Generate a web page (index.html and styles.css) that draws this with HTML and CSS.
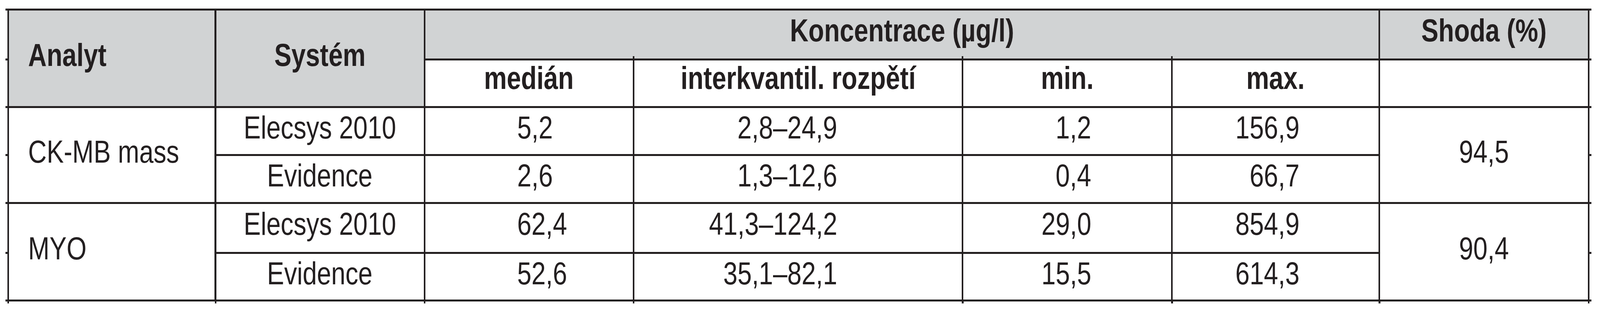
FILE: index.html
```html
<!DOCTYPE html>
<html lang="cs">
<head>
<meta charset="utf-8">
<title>Tabulka</title>
<link rel="stylesheet" href="styles.css">
</head>
<body>
<div class="page">
 <div class="frame">
  <div class="table">
    <div class="cell hd left span-r2 c1"><span class="t">Analyt</span></div>
    <div class="cell hd span-r2 c2"><span class="t">Systém</span></div>
    <div class="cell hd top-row span-konc"><span class="t">Koncentrace (µg/l)</span></div>
    <div class="cell hd top-row c7"><span class="t">Shoda (%)</span></div>

    <div class="cell sub c3"><span class="t">medián</span></div>
    <div class="cell sub c4"><span class="t">interkvantil. rozpětí</span></div>
    <div class="cell sub c5"><span class="t">min.</span></div>
    <div class="cell sub c6"><span class="t">max.</span></div>
    <div class="cell sub c7"></div>

    <div class="cell left span-r2 c1"><span class="t">CK-MB mass</span></div>
    <div class="cell c2"><span class="t">Elecsys 2010</span></div>
    <div class="cell num-med c3"><span class="t">5,2</span></div>
    <div class="cell num-iqr c4"><span class="t">2,8–24,9</span></div>
    <div class="cell num-min c5"><span class="t">1,2</span></div>
    <div class="cell num-max c6"><span class="t">156,9</span></div>
    <div class="cell span-r2 c7"><span class="t">94,5</span></div>

    <div class="cell c2"><span class="t">Evidence</span></div>
    <div class="cell num-med c3"><span class="t">2,6</span></div>
    <div class="cell num-iqr c4"><span class="t">1,3–12,6</span></div>
    <div class="cell num-min c5"><span class="t">0,4</span></div>
    <div class="cell num-max c6"><span class="t">66,7</span></div>

    <div class="cell left span-r2 c1"><span class="t">MYO</span></div>
    <div class="cell tall c2"><span class="t">Elecsys 2010</span></div>
    <div class="cell tall num-med c3"><span class="t">62,4</span></div>
    <div class="cell tall num-iqr c4"><span class="t">41,3–124,2</span></div>
    <div class="cell tall num-min c5"><span class="t">29,0</span></div>
    <div class="cell tall num-max c6"><span class="t">854,9</span></div>
    <div class="cell span-r2 c7"><span class="t">90,4</span></div>

    <div class="cell c2"><span class="t">Evidence</span></div>
    <div class="cell num-med c3"><span class="t">52,6</span></div>
    <div class="cell num-iqr c4"><span class="t">35,1–82,1</span></div>
    <div class="cell num-min c5"><span class="t">15,5</span></div>
    <div class="cell num-max c6"><span class="t">614,3</span></div>
  </div>
 </div>
</div>
</body>
</html>
```

FILE: styles.css
```css
/* Horizontal measures are authored in reference pixels (the reference is
   4853px wide) and expressed through --u, so the table always fits the
   real viewport width; vertical measures stay in px. */
:root {
  --u: calc(100vw / 4853);
  --sx: tan(atan2(100vw, 4853px));
  --ink: #231f20;
  --head: #d1d3d4;
}

html, body {
  margin: 0;
  padding: 0;
  background: #ffffff;
  overflow: hidden;
}

body {
  font-family: "Liberation Sans", Arial, sans-serif;
  color: var(--ink);
}

.page {
  padding: 22px 0 0 calc(16 * var(--u));
}

/* frame: rule stubs that overshoot the table on the left/right
   and small ticks of the column rules under the bottom rule */
.frame {
  display: inline-block;
  vertical-align: top;
  padding: 0 calc(6 * var(--u)) 5px;
  background:
    linear-gradient(to right,
      transparent calc(6 * var(--u)),
      var(--ink) calc(6 * var(--u)) calc(11 * var(--u)),
      transparent calc(11 * var(--u)) calc(635 * var(--u)),
      var(--ink) calc(635 * var(--u)) calc(640 * var(--u)),
      transparent calc(640 * var(--u)) calc(1269 * var(--u)),
      var(--ink) calc(1269 * var(--u)) calc(1274 * var(--u)),
      transparent calc(1274 * var(--u)) calc(1903 * var(--u)),
      var(--ink) calc(1903 * var(--u)) calc(1908 * var(--u)),
      transparent calc(1908 * var(--u)) calc(2901 * var(--u)),
      var(--ink) calc(2901 * var(--u)) calc(2906 * var(--u)),
      transparent calc(2906 * var(--u)) calc(3536 * var(--u)),
      var(--ink) calc(3536 * var(--u)) calc(3541 * var(--u)),
      transparent calc(3541 * var(--u)) calc(4165 * var(--u)),
      var(--ink) calc(4165 * var(--u)) calc(4170 * var(--u)),
      transparent calc(4170 * var(--u)) calc(4800 * var(--u)),
      var(--ink) calc(4800 * var(--u)) calc(4805 * var(--u)),
      transparent calc(4805 * var(--u))) 0 100% / 100% 5px no-repeat,
    linear-gradient(to bottom,
      var(--ink) 0 5px,
      transparent 5px 128px,
      var(--ink) 128px 133px,
      transparent 133px 250px,
      var(--ink) 250px 255px,
      transparent 255px 373px,
      var(--ink) 373px 378px,
      transparent 378px 496px,
      var(--ink) 496px 501px,
      transparent 501px 624px,
      var(--ink) 624px 629px,
      transparent 629px 746px,
      var(--ink) 746px 751px,
      transparent 751px) 0 0 / 100% 100% no-repeat;
}

.table {
  display: grid;
  padding: 5px calc(5 * var(--u));
  column-gap: calc(5 * var(--u));
  row-gap: 5px;
  background: var(--ink);
  grid-template-columns:
    calc(624 * var(--u)) calc(629 * var(--u)) calc(629 * var(--u))
    calc(993 * var(--u)) calc(630 * var(--u)) calc(624 * var(--u))
    calc(630 * var(--u));
  grid-template-rows: 123px 117px 118px 118px 123px 117px;
  grid-auto-flow: row dense;
}

.cell {
  display: flex;
  align-items: center;
  justify-content: center;
  min-width: 0;
  background: #ffffff;
  font-size: 81px;
  line-height: 1.15;
  white-space: nowrap;
  padding: 0 0 16px 0;
  box-sizing: border-box;
}

.t {
  display: inline-block;
  transform: scaleX(calc(var(--sx) * 0.96));
  transform-origin: 50% 50%;
}

.hd {
  background: var(--head);
  font-weight: bold;
}

.top-row {
  padding-bottom: 20px;
}

.sub {
  font-weight: bold;
  padding-bottom: 25px;
}

.tall {
  padding-bottom: 19px;
}

.left {
  justify-content: flex-start;
  padding-left: calc(58 * var(--u));
}

.left .t,
.num-med .t {
  transform-origin: 0 50%;
}

.num-iqr .t,
.num-min .t,
.num-max .t {
  transform-origin: 100% 50%;
}

.span-r2 {
  grid-row: span 2;
}

.c1 { grid-column: 1; }
.c2 { grid-column: 2; }
.c3 { grid-column: 3; }
.c4 { grid-column: 4; }
.c5 { grid-column: 5; }
.c6 { grid-column: 6; }
.c7 { grid-column: 7; }

/* spanning header cell, with the short rule ends of the sub-columns
   poking up above the rule beneath it */
.span-konc {
  grid-column: 3 / span 4;
  background:
    linear-gradient(to right,
      transparent calc(629 * var(--u)),
      var(--ink) calc(629 * var(--u)) calc(634 * var(--u)),
      transparent calc(634 * var(--u)) calc(1627 * var(--u)),
      var(--ink) calc(1627 * var(--u)) calc(1632 * var(--u)),
      transparent calc(1632 * var(--u)) calc(2262 * var(--u)),
      var(--ink) calc(2262 * var(--u)) calc(2267 * var(--u)),
      transparent calc(2267 * var(--u))) 0 100% / 100% 6px no-repeat,
    var(--head);
}

.num-med {
  justify-content: flex-start;
  padding-left: calc(279 * var(--u));
}

.num-iqr {
  justify-content: flex-end;
  padding-right: calc(377 * var(--u));
}

.num-min {
  justify-content: flex-end;
  padding-right: calc(242 * var(--u));
}

.num-max {
  justify-content: flex-end;
  padding-right: calc(239 * var(--u));
}
```
